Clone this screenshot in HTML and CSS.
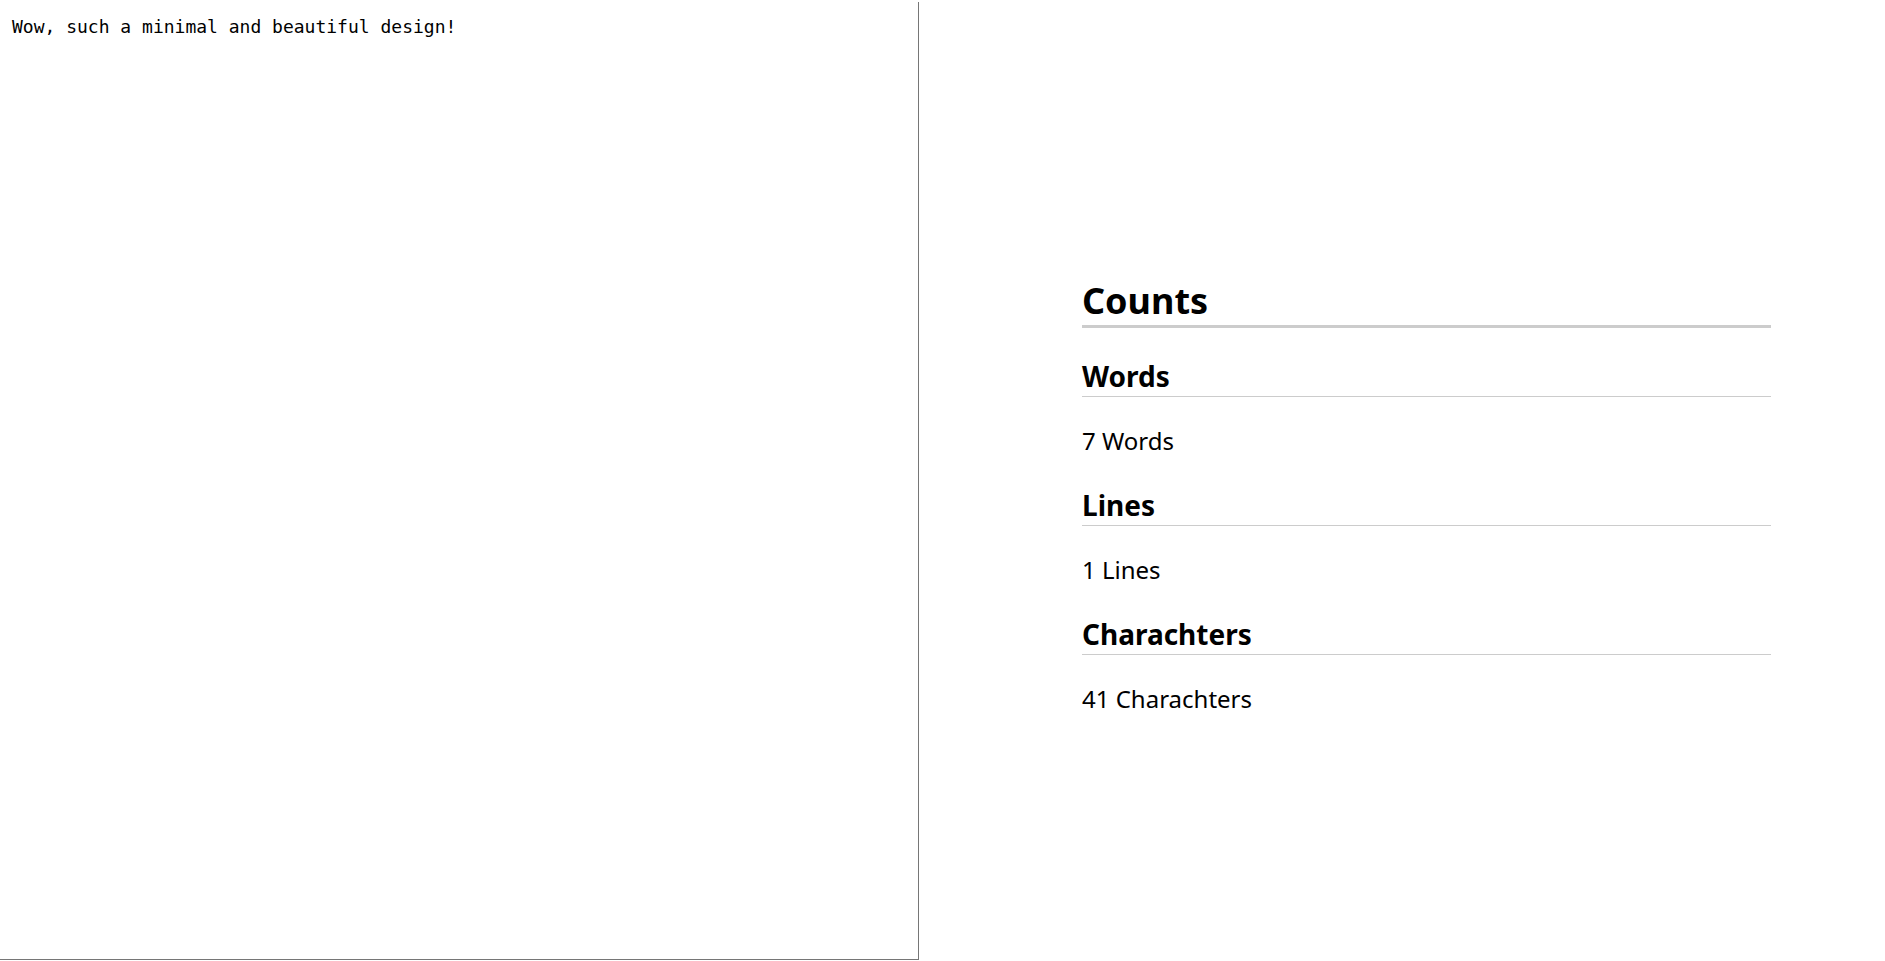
FILE: index.html
```html
<!DOCTYPE html>
<html lang="en">
<head>
<meta charset="utf-8">
<title>Counter</title>
<link rel="stylesheet" href="styles.css">
</head>
<body>
<div class="app">
  <textarea class="editor" spellcheck="false">Wow, such a minimal and beautiful design!</textarea>
  <section class="stats">
    <h1 class="stats-title">Counts</h1>
    <h2 class="stat-title">Words</h2>
    <p class="stat-value">7 Words</p>
    <h2 class="stat-title">Lines</h2>
    <p class="stat-value">1 Lines</p>
    <h2 class="stat-title">Charachters</h2>
    <p class="stat-value">41 Charachters</p>
  </section>
</div>
</body>
</html>
```

FILE: styles.css
```css
html, body {
  margin: 0;
  padding: 0;
  background: #fff;
  overflow: hidden;
}

.app {
  display: flex;
  height: 961px;
}

.editor {
  display: block;
  box-sizing: border-box;
  width: 919px;
  height: 958px;
  margin: 2px 0 0 0;
  padding: 14px 12px;
  border: none;
  border-right: 1px solid #767676;
  border-bottom: 1px solid #767676;
  outline: none;
  resize: none;
  font-family: "DejaVu Sans Mono", monospace;
  font-size: 18px;
  color: #000;
  background: #fff;
  flex: none;
}

.stats {
  flex: 1;
  box-sizing: border-box;
  padding: 279px 114px 0 163px;
  font-family: "Noto Sans", "Open Sans", sans-serif;
  color: #000;
}

.stats-title {
  margin: 0;
  font-size: 36px;
  line-height: 44px;
  font-weight: 700;
  padding-bottom: 2px;
  border-bottom: 3px solid #cccccc;
}

.stat-title {
  margin: 30px 0 0 0;
  font-size: 28px;
  line-height: 36px;
  font-weight: 700;
  padding-bottom: 2px;
  border-bottom: 1px solid #cccccc;
}

.stats-title + .stat-title {
  margin-top: 30px;
}

.stat-value {
  margin: 28px 0 0 0;
  font-size: 24px;
  line-height: 32px;
}
```
